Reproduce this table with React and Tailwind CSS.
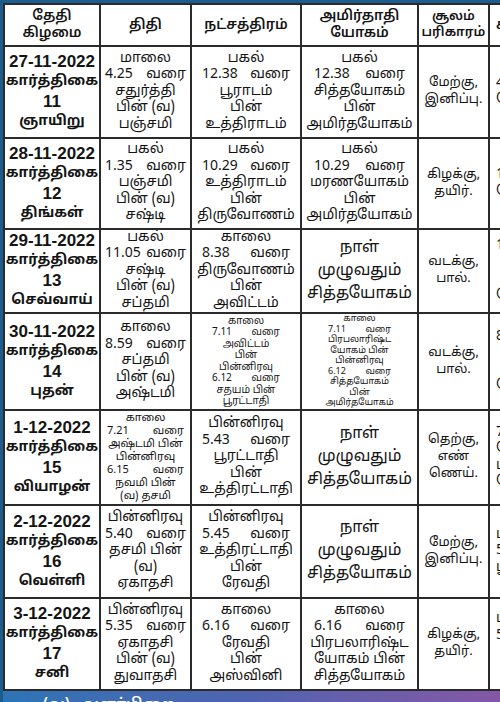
import React from 'react';

const rows = [
  {
    day: ['27-11-2022', 'கார்த்திகை', '11', 'ஞாயிறு'],
    thithi: ['மாலை', '4.25 வரை', 'சதுர்த்தி', 'பின் (வ)', 'பஞ்சமி'],
    star: ['பகல்', '12.38 வரை', 'பூராடம்', 'பின்', 'உத்திராடம்'],
    yogam: ['பகல்', '12.38 வரை', 'சித்தயோகம்', 'பின்', 'அமிர்தயோகம்'],
    soolam: ['மேற்கு,', 'இனிப்பு.'],
    extra: ['4.25', 'மேஷம்'],
  },
  {
    day: ['28-11-2022', 'கார்த்திகை', '12', 'திங்கள்'],
    thithi: ['பகல்', '1.35 வரை', 'பஞ்சமி', 'பின் (வ)', 'சஷ்டி'],
    star: ['பகல்', '10.29 வரை', 'உத்திராடம்', 'பின்', 'திருவோணம்'],
    yogam: ['பகல்', '10.29 வரை', 'மரணயோகம்', 'பின்', 'அமிர்தயோகம்'],
    soolam: ['கிழக்கு,', 'தயிர்.'],
    extra: ['1.35', 'மேஷம்'],
  },
  {
    day: ['29-11-2022', 'கார்த்திகை', '13', 'செவ்வாய்'],
    thithi: ['பகல்', '11.05 வரை', 'சஷ்டி', 'பின் (வ)', 'சப்தமி'],
    star: ['காலை', '8.38 வரை', 'திருவோணம்', 'பின்', 'அவிட்டம்'],
    yogam: ['நாள்', 'முழுவதும்', 'சித்தயோகம்'],
    big: true,
    soolam: ['வடக்கு,', 'பால்.'],
    extra: ['11.05', '', '', 'மேஷம்'],
  },
  {
    day: ['30-11-2022', 'கார்த்திகை', '14', 'புதன்'],
    thithi: ['காலை', '8.59 வரை', 'சப்தமி', 'பின் (வ)', 'அஷ்டமி'],
    star: ['காலை', '7.11 வரை', 'அவிட்டம்', 'பின்', 'பின்னிரவு', '6.12 வரை', 'சதயம் பின்', 'பூரட்டாதி'],
    starSmall: true,
    yogam: ['காலை', '7.11 வரை', 'பிரபலாரிஷ்ட', 'யோகம் பின்', 'பின்னிரவு', '6.12 வரை', 'சித்தயோகம்', 'பின்', 'அமிர்தயோகம்'],
    yogamSmall: true,
    soolam: ['வடக்கு,', 'பால்.'],
    extra: ['8.59', '', '', 'மேஷம்'],
  },
  {
    day: ['1-12-2022', 'கார்த்திகை', '15', 'வியாழன்'],
    thithi: ['காலை', '7.21 வரை', 'அஷ்டமி பின்', 'பின்னிரவு', '6.15 வரை', 'நவமி பின்', '(வ) தசமி'],
    thithiSmall: true,
    star: ['பின்னிரவு', '5.43 வரை', 'பூரட்டாதி', 'பின்', 'உத்திரட்டாதி'],
    yogam: ['நாள்', 'முழுவதும்', 'சித்தயோகம்'],
    big: true,
    soolam: ['தெற்கு,', 'எண்', 'ணெய்.'],
    extra: ['7.21', 'மேஷம்', 'பகல்', 'மேஷம்'],
  },
  {
    day: ['2-12-2022', 'கார்த்திகை', '16', 'வெள்ளி'],
    thithi: ['பின்னிரவு', '5.40 வரை', 'தசமி பின்', '(வ)', 'ஏகாதசி'],
    star: ['பின்னிரவு', '5.45 வரை', 'உத்திரட்டாதி', 'பின்', 'ரேவதி'],
    yogam: ['நாள்', 'முழுவதும்', 'சித்தயோகம்'],
    big: true,
    soolam: ['மேற்கு,', 'இனிப்பு.'],
    extra: ['பகல்', '5.40', 'பூசம்'],
  },
  {
    day: ['3-12-2022', 'கார்த்திகை', '17', 'சனி'],
    thithi: ['பின்னிரவு', '5.35 வரை', 'ஏகாதசி', 'பின் (வ)', 'துவாதசி'],
    star: ['காலை', '6.16 வரை', 'ரேவதி', 'பின்', 'அஸ்வினி'],
    yogam: ['காலை', '6.16 வரை', 'பிரபலாரிஷ்ட', 'யோகம் பின்', 'சித்தயோகம்'],
    soolam: ['கிழக்கு,', 'தயிர்.'],
    extra: ['பகல்', '5.35', '', ''],
  },
];

const tamil = "font-['Noto_Sans_Tamil','Lohit_Tamil','Latha','Noto_Sans',sans-serif]";

const Line = ({ text }) => {
  if (text.includes(' வரை')) {
    const [a, b] = text.split(' ');
    return (
      <div className="flex w-full justify-between gap-1 whitespace-nowrap">
        <span>{a}</span>
        <span>{b}</span>
      </div>
    );
  }
  return <div className="whitespace-nowrap">{text || '\u00a0'}</div>;
};

const Cell = ({ lines, className = '' }) => (
  <div className={`flex flex-col items-center justify-center overflow-hidden bg-white text-center text-[#141414] ${className}`}>
    {lines.map((l, i) => (
      <Line key={i} text={l} />
    ))}
  </div>
);

export default function App() {
  return (
    <div className={`relative h-[702px] w-[500px] overflow-hidden bg-[#1d5d8e] pl-[3px] pt-[3px] ${tamil}`}>
      <div className="grid w-[615px] grid-cols-[94px_89px_108px_115px_69px_120px] grid-rows-[40px_90px_89px_82px_95px_93px_91px_90px] gap-[2px] bg-[#2b2b2b] p-[2px]">
        <Cell lines={['தேதி', 'கிழமை']} className="text-[14px] font-semibold leading-[17px]" />
        <Cell lines={['திதி']} className="text-[14px] font-semibold leading-[17px]" />
        <Cell lines={['நட்சத்திரம்']} className="text-[14px] font-semibold leading-[17px]" />
        <Cell lines={['அமிர்தாதி', 'யோகம்']} className="text-[14px] font-semibold leading-[17px]" />
        <Cell lines={['சூலம்', 'பரிகாரம்']} className="text-[13px] font-semibold leading-[16px]" />
        <Cell lines={['சந்திராஷ்டமம்']} className="items-start pl-[6px] text-[14px] font-semibold leading-[17px]" />

        {rows.map((r) => (
          <React.Fragment key={r.day[0]}>
            <div className="flex flex-col items-center justify-center bg-white text-center text-[14px] font-bold leading-[20px] text-[#141414]">
              <div className="font-['Liberation_Sans',Arial,sans-serif] text-[17px]">{r.day[0]}</div>
              <div className="whitespace-nowrap">{r.day[1]}</div>
              <div className="font-['Liberation_Sans',Arial,sans-serif] text-[17px]">{r.day[2]}</div>
              <div className="whitespace-nowrap">{r.day[3]}</div>
            </div>
            <Cell
              lines={r.thithi}
              className={r.thithiSmall ? 'px-[6px] text-[11px] leading-[13px]' : 'px-[4px] text-[14px] leading-[16.5px]'}
            />
            <Cell
              lines={r.star}
              className={r.starSmall ? 'px-[20px] text-[10px] leading-[11.5px]' : 'px-[10px] text-[14px] leading-[16.5px]'}
            />
            <Cell
              lines={r.yogam}
              className={
                r.big
                  ? 'text-[16px] leading-[23px]'
                  : r.yogamSmall
                  ? 'px-[26px] text-[9px] leading-[10.5px]'
                  : 'px-[12px] text-[14px] leading-[16.5px]'
              }
            />
            <Cell lines={r.soolam} className="text-[13px] leading-[17px] text-[#333]" />
            <Cell lines={r.extra} className="items-start pl-[6px] text-[14px] leading-[16.5px]" />
          </React.Fragment>
        ))}
      </div>
      <div className="h-[20px] bg-gradient-to-r from-[#2c74b6] via-[#4f63b0] to-[#8457a6] pl-[40px] pt-[7px] text-[15px] font-semibold leading-[16px] text-white">
        (வ) - வளர்பிறை
      </div>
    </div>
  );
}
